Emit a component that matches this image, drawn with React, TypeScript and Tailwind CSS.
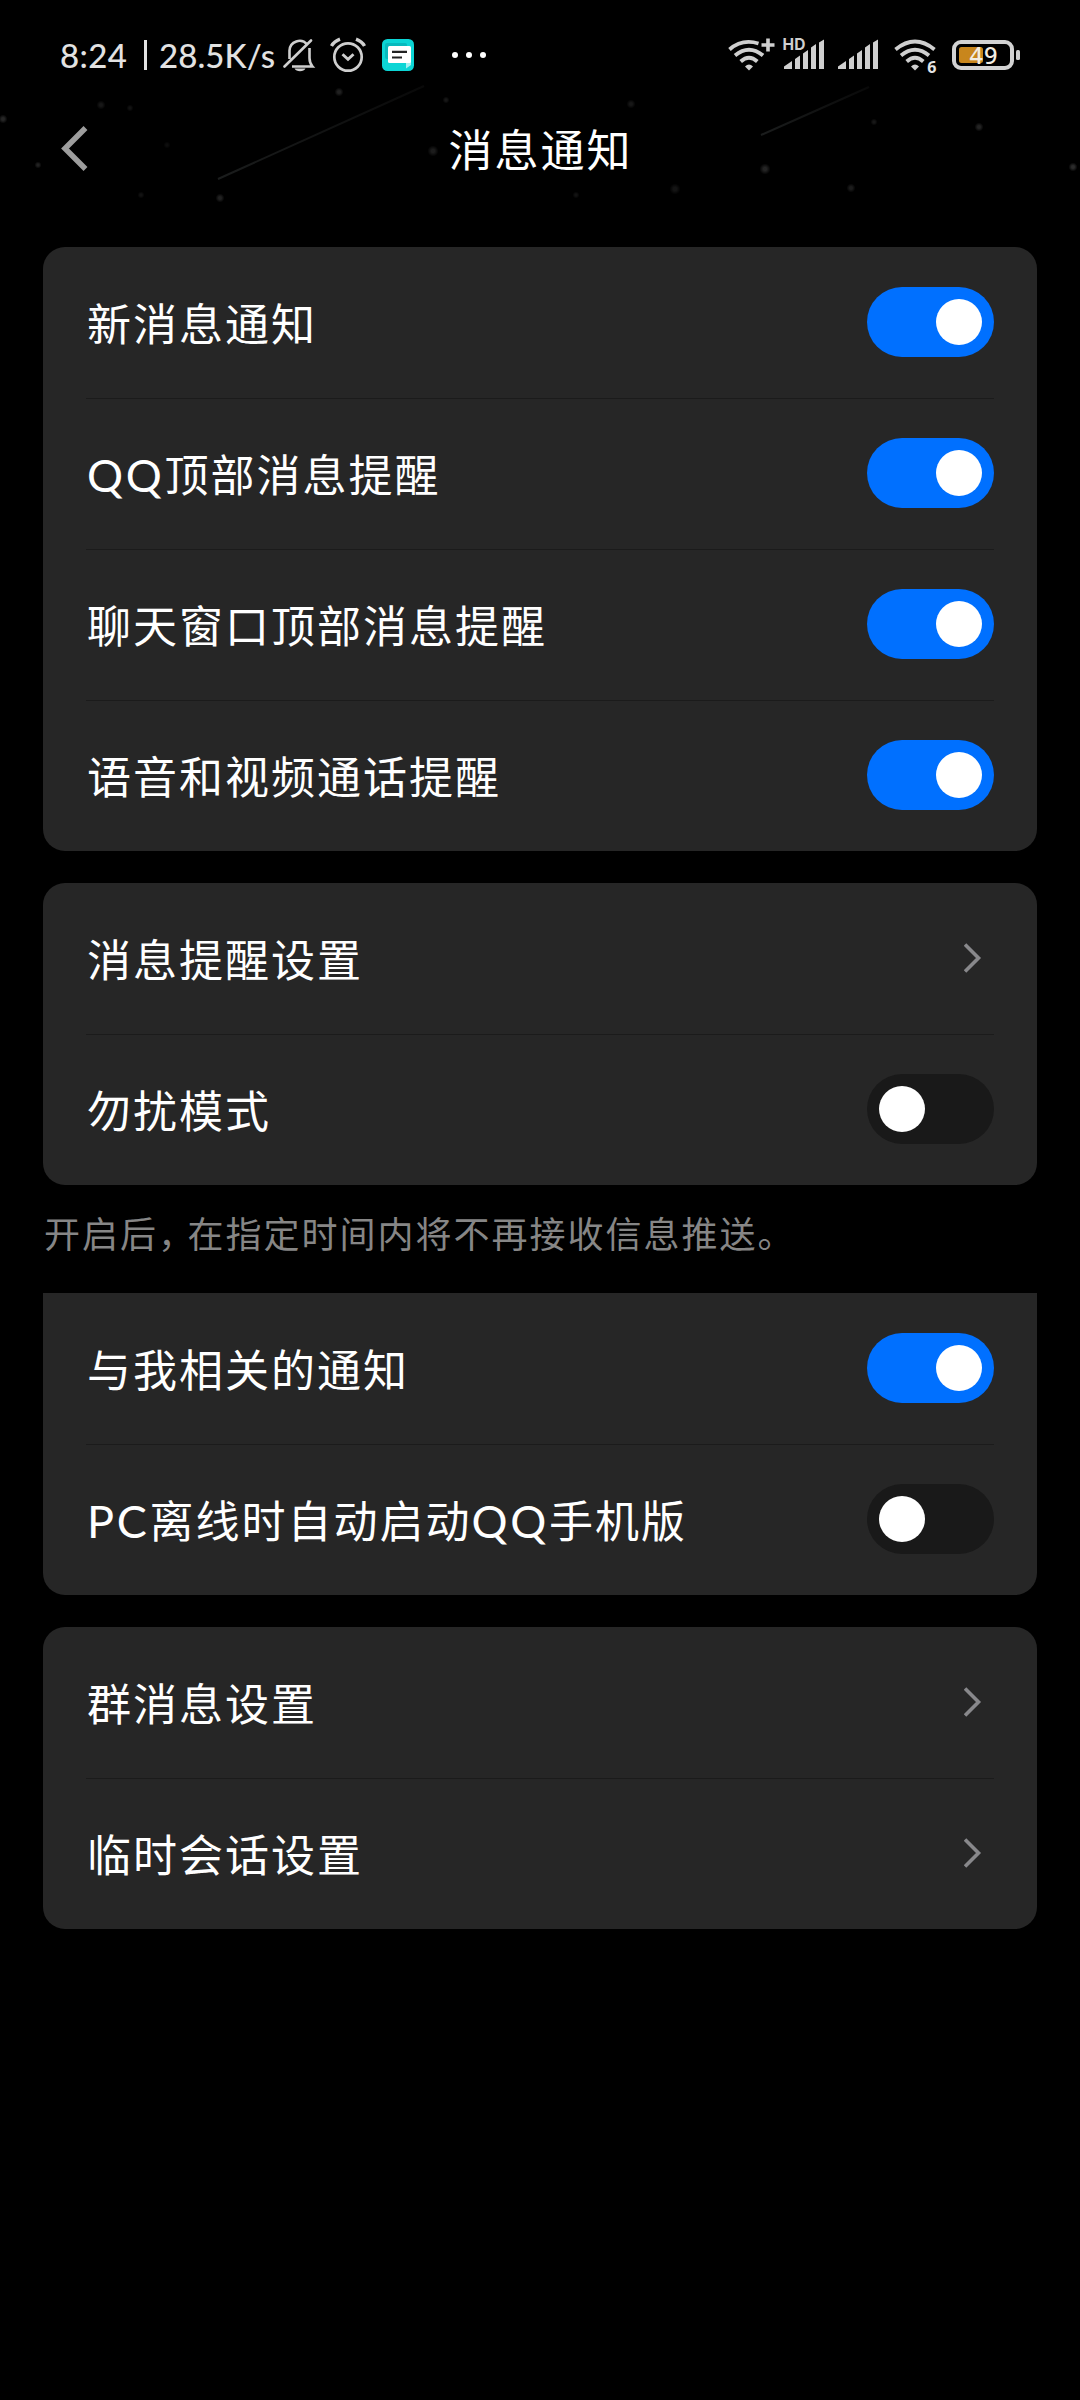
import React, { useState } from 'react';
import clsx from 'clsx';

type RowData = {
    label: React.ReactNode;
    kind: 'switch' | 'link';
    on?: boolean;
};

// Latin letters are set in a rounder face than the Chinese text beside them
const Latin: React.FC<{ children: string }> = ({ children }) => (
    <span className="font-['Lato'] text-[45px] leading-none tracking-[2.7px]">{children}</span>
);

const alertRows: RowData[] = [
    { label: '新消息通知', kind: 'switch', on: true },
    { label: <><Latin>QQ</Latin>顶部消息提醒</>, kind: 'switch', on: true },
    { label: '聊天窗口顶部消息提醒', kind: 'switch', on: true },
    { label: '语音和视频通话提醒', kind: 'switch', on: true },
];

const modeRows: RowData[] = [
    { label: '消息提醒设置', kind: 'link' },
    { label: '勿扰模式', kind: 'switch', on: false },
];

const relatedRows: RowData[] = [
    { label: '与我相关的通知', kind: 'switch', on: true },
    { label: <><Latin>PC</Latin>离线时自动启动<Latin>QQ</Latin>手机版</>, kind: 'switch', on: false },
];

const sessionRows: RowData[] = [
    { label: '群消息设置', kind: 'link' },
    { label: '临时会话设置', kind: 'link' },
];

const stars = [
    [3, 119, 4, 0.15], [38, 165, 3, 0.13], [101, 105, 4, 0.09], [130, 108, 3, 0.07],
    [167, 145, 3, 0.05], [141, 195, 3, 0.07], [220, 198, 4, 0.13], [339, 92, 4, 0.13],
    [446, 100, 3, 0.09], [433, 151, 5, 0.11], [631, 104, 4, 0.09], [576, 195, 3, 0.07],
    [675, 189, 5, 0.08], [765, 169, 5, 0.14], [851, 188, 4, 0.11], [874, 122, 3, 0.09],
    [979, 127, 4, 0.14], [1073, 167, 4, 0.17],
];

const Starfield: React.FC = () => (
    <svg className="absolute left-0 top-0" width="1080" height="224" viewBox="0 0 1080 224" fill="none">
        <defs>
            <radialGradient id="star">
                <stop offset="0.3" stopColor="#fff" />
                <stop offset="1" stopColor="#fff" stopOpacity="0" />
            </radialGradient>
            <linearGradient id="trailA" gradientUnits="userSpaceOnUse" x1="218" y1="179" x2="424" y2="86">
                <stop stopColor="#1b1d1d" />
                <stop offset="1" stopColor="#090909" />
            </linearGradient>
            <linearGradient id="trailB" gradientUnits="userSpaceOnUse" x1="761" y1="135" x2="869" y2="87">
                <stop stopColor="#1b1d1d" />
                <stop offset="1" stopColor="#090909" />
            </linearGradient>
        </defs>
        {stars.map(([cx, cy, r, opacity]) => (
            <circle key={cx} cx={cx} cy={cy} r={r + 0.5} fill="url(#star)" opacity={opacity} />
        ))}
        <path d="M218 179L424 86" stroke="url(#trailA)" strokeWidth="2" />
        <path d="M761 135L869 87" stroke="url(#trailB)" strokeWidth="2" />
    </svg>
);

const BellOffIcon: React.FC = () => (
    <svg width="34" height="40" viewBox="0 0 34 40" fill="none" stroke="#cfcfcf" strokeWidth="2.6">
        <path d="M6.500 23V14.500a10 10 0 0 1 17.700-6" />
        <path d="M26.500 12v10q0 5 3 8.500H9" />
        <path d="M1.500 30.500L28 4.500" strokeLinecap="round" />
        <path d="M11.500 32.500h11q-1.500 2.800-5.500 2.800t-5.500-2.800z" fill="#cfcfcf" stroke="none" />
    </svg>
);

const AlarmIcon: React.FC = () => (
    <svg width="36" height="40" viewBox="0 0 36 40" fill="none" stroke="#cfcfcf">
        <circle cx="18" cy="21" r="13.700" strokeWidth="2.700" />
        <path d="M12.500 18.300l5.500 5 5.500-5" strokeWidth="2.900" />
        <path d="M1.500 10Q4 5.500 10 3.200M34.500 10Q32 5.500 26 3.200" strokeWidth="3.400" />
    </svg>
);

const ChatAppIcon: React.FC = () => (
    <svg width="32" height="40" viewBox="0 0 32 40">
        <rect y="3" width="32" height="32" rx="5.500" fill="#0cd5d5" />
        <rect x="3" y="7" width="22" height="16" rx="2" fill="#08b9bd" />
        <path d="M24 26h5v3l-5 3.500z" fill="#a4f0f0" />
        <rect x="6" y="10" width="23" height="17" rx="1.500" fill="#fff" />
        <path d="M10 15.800h15M10 21.500h10" stroke="#222" strokeWidth="2.200" />
    </svg>
);

const WifiPlusIcon: React.FC = () => (
    <svg width="47" height="40" viewBox="0 0 47 40" fill="none" stroke="#cfcfcf" strokeWidth="3.800">
        <path d="M1.500 13.500Q14 2.500 30.500 7.500" />
        <path d="M7 19.500Q21 8 35 19.500" />
        <path d="M12.700 25.500Q21 18 29.300 25.500" />
        <path d="M21 34.500l-4-4q4-4 8 0z" fill="#cfcfcf" stroke="none" />
        <path d="M40 2.500v13M33.500 9h13" strokeWidth="3.600" />
    </svg>
);

const Wifi6Icon: React.FC = () => (
    <svg width="46" height="40" viewBox="0 0 46 40" fill="none" stroke="#cfcfcf" strokeWidth="3.800">
        <path d="M1.500 13.500Q21 -2.500 40.500 13.500" />
        <path d="M7 19.500Q21 8 35 19.500" />
        <path d="M12.700 25.500Q21 18 29.300 25.500" />
        <path d="M21 34.500l-4-4q4-4 8 0z" fill="#cfcfcf" stroke="none" />
        <text x="33.300" y="36.500" fill="#e4e4e4" stroke="none" className="font-['Noto_Sans'] text-[16px] font-bold">6</text>
    </svg>
);

const SignalIcon: React.FC<{ hd?: boolean }> = ({ hd }) => (
    <svg width="42" height="40" viewBox="0 0 42 40" fill="#cfcfcf" className="overflow-visible">
        <path d="M0 33v-2.500L8 25v8zM11 33V23l5-3.500V33zM19 33V17.500l5-3.500V33zM27 33V11.500L32 8v25zM35 33V6.500L40 3.500V33z" />
        {hd && (
            <>
                <path d="M-2 0h23v14.500H-2z" fill="#000" />
                <text x="-1.500" y="14" textLength="23" className="font-['Inter'] text-[15.500px] font-bold">HD</text>
            </>
        )}
    </svg>
);

const BatteryIcon: React.FC = () => (
    <svg width="68" height="40" viewBox="0 0 68 40" fill="none">
        <rect x="2" y="6" width="58" height="26" rx="7" stroke="#d2d2d2" strokeWidth="4" />
        <rect x="7" y="11" width="24" height="16" rx="2.500" fill="#c8861c" />
        <rect x="64" y="14" width="4" height="10" rx="1.500" fill="#cfcfcf" />
        <text x="17.500" y="27.800" fill="#f3ede2" textLength="28" className="font-['Noto_Sans'] text-[23.500px] font-medium">49</text>
    </svg>
);

const StatusBar: React.FC = () => (
    <div className="relative flex h-[76px] items-start pt-9 pl-[60px]">
        <div className="flex h-[38px] w-[223px] items-center whitespace-pre font-['Lato'] text-[33px] font-medium text-[#e2e2e2]">
            <span className="w-[84px] tracking-[0.4px]">8:24</span>
            <span className="h-[30px] w-[3px] bg-[#e2e2e2]" />
            <span className="ml-3 tracking-[0.1px]">28.5K/s</span>
        </div>
        <BellOffIcon />
        <div className="ml-[13px]"><AlarmIcon /></div>
        <div className="ml-4"><ChatAppIcon /></div>
        <div className="ml-[38px] flex h-[38px] items-center gap-2">
            <span className="size-1.5 rounded-full bg-white" />
            <span className="size-1.5 rounded-full bg-white" />
            <span className="size-1.5 rounded-full bg-white" />
        </div>
        <div className="ml-auto flex pr-[60px]">
            <WifiPlusIcon />
            <div className="ml-[9px]"><SignalIcon hd /></div>
            <div className="ml-3"><SignalIcon /></div>
            <div className="ml-3.5"><Wifi6Icon /></div>
            <div className="ml-3"><BatteryIcon /></div>
        </div>
    </div>
);

const NavBar: React.FC = () => (
    <div className="relative flex h-[148px] items-center pl-[58px]">
        <button className="w-9">
            <svg width="36" height="52" viewBox="0 0 36 52" fill="none" stroke="#9d9d9d" strokeWidth="5.500">
                <path d="M27.500 4L7 24.500 27.500 45" />
            </svg>
        </button>
        <h1 className="flex-1 pr-[93px] pb-1 text-center tracking-[2px]">消息通知</h1>
    </div>
);

const Toggle: React.FC<{ initial?: boolean }> = ({ initial = false }) => {
    const [on, setOn] = useState(initial);

    return (
        <button
            onClick={() => setOn(!on)}
            className={clsx('flex h-[70px] w-[127px] items-center rounded-full px-3', on ? 'justify-end bg-[#0070ff]' : 'justify-start bg-[#191919]')}
        >
            <span className="size-[46px] rounded-full bg-white" />
        </button>
    );
};

const Card: React.FC<{ rows: RowData[]; className?: string }> = ({ rows, className }) => (
    <div className={clsx('rounded-[22px] bg-[#262626] px-[43px]', className)}>
        {rows.map((row, i) => (
            <div key={i} className={clsx('flex h-[151px] items-center justify-between pb-0.5', i > 0 && 'border-t border-[#1b1b1b]')}>
                <span className="h-[60px] pl-px tracking-[2px] whitespace-nowrap">{row.label}</span>
                {row.kind === 'switch' ? (
                    <Toggle initial={row.on} />
                ) : (
                    <svg width="30" height="34" viewBox="0 0 30 34" fill="none" stroke="#88888b" strokeWidth="3.600">
                        <path d="M1 3.500L14.500 17 1 30.500" />
                    </svg>
                )}
            </div>
        ))}
    </div>
);

const App: React.FC = () => (
    <div className="relative h-[2400px] w-[1080px] overflow-hidden bg-black font-['Noto_Sans_CJK_SC',sans-serif] text-[44px] leading-[60px] text-white">
        <Starfield />
        <StatusBar />
        <NavBar />
        <div className="px-[43px] pt-[23px]">
            <Card rows={alertRows} />
            <Card rows={modeRows} className="mt-8" />
            <p className="h-[108px] pt-[17px] pl-px text-[36px] tracking-[2px] whitespace-nowrap text-[#868686]">
                开启后<span className="tracking-[-6.5px]">{'\uff0c'}</span>在指定时间内将不再接收信息推送。
            </p>
            <Card rows={relatedRows} className="rounded-t-none" />
            <Card rows={sessionRows} className="mt-8" />
        </div>
    </div>
);

export default App;
